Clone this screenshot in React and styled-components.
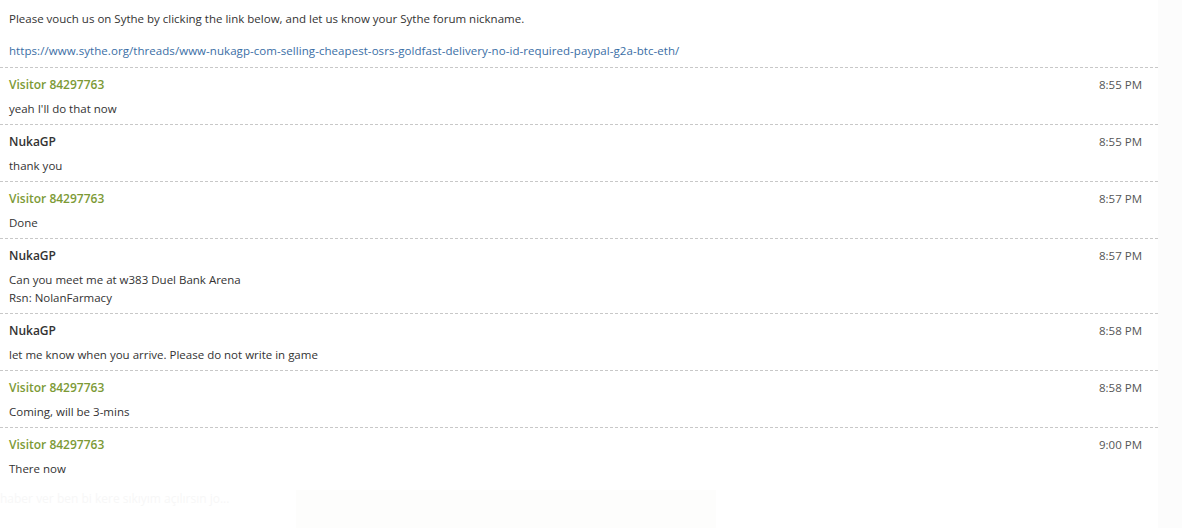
import React from "react";
import styled, { createGlobalStyle } from "styled-components";

const Global = createGlobalStyle`
  html, body { margin: 0; padding: 0; background: #fff; }
  body { font-family: "Open Sans", "Noto Sans", sans-serif; }
`;

const Page = styled.div`
  display: flex;
  width: 1182px;
  height: 528px;
  overflow: hidden;
`;

const Transcript = styled.div`
  width: 1158px;
  flex: none;
  display: flex;
  flex-direction: column;
`;

const Gutter = styled.div`
  flex: 1;
  background: #fcfcfc;
`;

const Intro = styled.div`
  padding: 10px 0 7px 9px;
  font-size: 11.5px;
  color: #333;
  line-height: 18px;
  display: flex;
  flex-direction: column;
  gap: 14px;
`;

const Link = styled.a`
  color: #3a6ea5;
  text-decoration: none;
  letter-spacing: 0.06px;
`;

const Message = styled.div`
  border-top: 1px dashed #c8c8c8;
  padding: 8px 16px 6px 9px;
  display: grid;
  grid-template-columns: 1fr auto;
  row-gap: 6px;
  &:last-of-type { border-bottom: 1px dashed #c8c8c8; }
`;

const Author = styled.div`
  font-size: 12px;
  line-height: 18px;
  font-weight: 600;
  color: ${(p) => (p.$visitor ? "#7c9a36" : "#333")};
`;

const Time = styled.div`
  font-size: 11.5px;
  line-height: 18px;
  color: #555;
`;

const Body = styled.div`
  grid-column: 1 / -1;
  font-size: 11.5px;
  line-height: 18px;
  color: #333;
  white-space: pre-line;
`;

const Ghost = styled.div`
  display: flex;
  align-items: flex-start;
  padding-top: 6px;
`;

const GhostText = styled.div`
  width: 296px;
  font-size: 12px;
  color: #f7f7f7;
  white-space: nowrap;
  overflow: hidden;
`;

const GhostCard = styled.div`
  width: ${(p) => p.$w}px;
  height: 40px;
  background: #fdfdfc;
`;

const messages = [
  { who: "Visitor 84297763", v: true, t: "8:55 PM", text: "yeah I'll do that now" },
  { who: "NukaGP", t: "8:55 PM", text: "thank you" },
  { who: "Visitor 84297763", v: true, t: "8:57 PM", text: "Done" },
  { who: "NukaGP", t: "8:57 PM", text: "Can you meet me at w383 Duel Bank Arena\nRsn: NolanFarmacy" },
  { who: "NukaGP", t: "8:58 PM", text: "let me know when you arrive. Please do not write in game" },
  { who: "Visitor 84297763", v: true, t: "8:58 PM", text: "Coming, will be 3-mins" },
  { who: "Visitor 84297763", v: true, t: "9:00 PM", text: "There now" },
];

export default function App() {
  return (
    <>
      <Global />
      <Page>
        <Transcript>
          <Intro>
            <div>Please vouch us on Sythe by clicking the link below, and let us know your Sythe forum nickname.</div>
            <Link href="#">https://www.sythe.org/threads/www-nukagp-com-selling-cheapest-osrs-goldfast-delivery-no-id-required-paypal-g2a-btc-eth/</Link>
          </Intro>
          {messages.map((m, i) => (
            <Message key={i}>
              <Author $visitor={m.v}>{m.who}</Author>
              <Time>{m.t}</Time>
              <Body>{m.text}</Body>
            </Message>
          ))}
          <Ghost>
            <GhostText>haber ver ben bi kere sıkıyım açılırsın jo...</GhostText>
            <GhostCard $w={90} />
            <GhostCard $w={330} />
          </Ghost>
        </Transcript>
        <Gutter />
      </Page>
    </>
  );
}
